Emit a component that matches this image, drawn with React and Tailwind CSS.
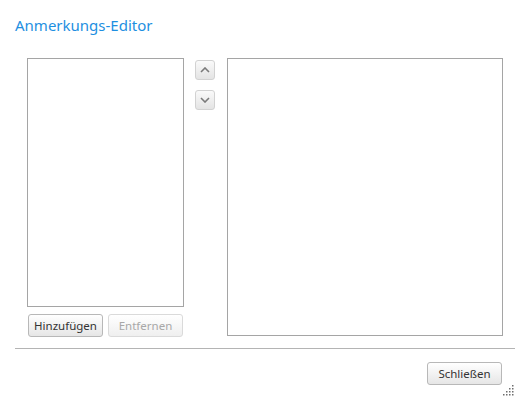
import React from 'react';

const BTN =
  'h-[23px] rounded-[3px] border bg-gradient-to-b from-white to-[#e6e6e6] text-[11.5px] leading-none flex items-center justify-center';

function ArrowButton({ dir }) {
  return (
    <button className="w-[20px] h-[20px] rounded-[3px] border border-[#d2d2d2] bg-gradient-to-b from-[#fafafa] to-[#e4e4e4] flex items-center justify-center">
      <svg width="10" height="6" viewBox="0 0 10 6">
        <path
          d={dir === 'up' ? 'M1 5 L5 1 L9 5' : 'M1 1 L5 5 L9 1'}
          fill="none"
          stroke="#7a7a7a"
          strokeWidth="1.6"
        />
      </svg>
    </button>
  );
}

function ResizeGrip() {
  const dots = [
    [8, 0], [8, 3], [5, 3], [8, 6], [5, 6], [2, 6], [8, 9], [5, 9], [2, 9], [-1, 9],
  ];
  return (
    <svg width="11" height="11" viewBox="-1 0 11 11" className="absolute right-[14px] bottom-[13px]">
      {dots.map(([x, y], i) => (
        <rect key={i} x={x} y={y} width="1.5" height="1.5" fill="#6e6e6e" />
      ))}
    </svg>
  );
}

export default function App() {
  return (
    <div
      className="relative w-[528px] h-[409px] bg-white px-[15px] pt-[13px]"
      style={{ fontFamily: '"Noto Sans", "Liberation Sans", sans-serif' }}
    >
      <h1 className="text-[15px] leading-[24px] text-[#1e8fe1] font-normal">Anmerkungs-Editor</h1>

      <div className="flex mt-[21px] pl-[12px]">
        {/* Liste */}
        <div className="w-[157px] flex flex-col">
          <div className="h-[249px] border border-[#a5a5a5] bg-white" />
          <div className="flex gap-[5px] mt-[7px] pl-[1px]">
            <button className={`${BTN} w-[75px] border-[#b8b8b8] text-[#333]`}>Hinzufügen</button>
            <button className={`${BTN} w-[75px] border-[#dadada] text-[#a8a8a8] from-[#fcfcfc] to-[#efefef]`}>
              Entfernen
            </button>
          </div>
        </div>

        {/* Pfeile */}
        <div className="flex flex-col gap-[10px] ml-[11px] pt-[2px]">
          <ArrowButton dir="up" />
          <ArrowButton dir="down" />
        </div>

        {/* Textfeld */}
        <div className="ml-[12px] w-[276px] h-[278px] border border-[#a5a5a5] bg-white" />
      </div>

      <div className="mt-[11px] -mr-[2px] h-px bg-[#b4b4b4]" />

      <div className="flex justify-end mt-[13px] pr-[11px]">
        <button className={`${BTN} w-[75px] border-[#b8b8b8] text-[#333]`}>Schließen</button>
      </div>

      <ResizeGrip />
    </div>
  );
}
